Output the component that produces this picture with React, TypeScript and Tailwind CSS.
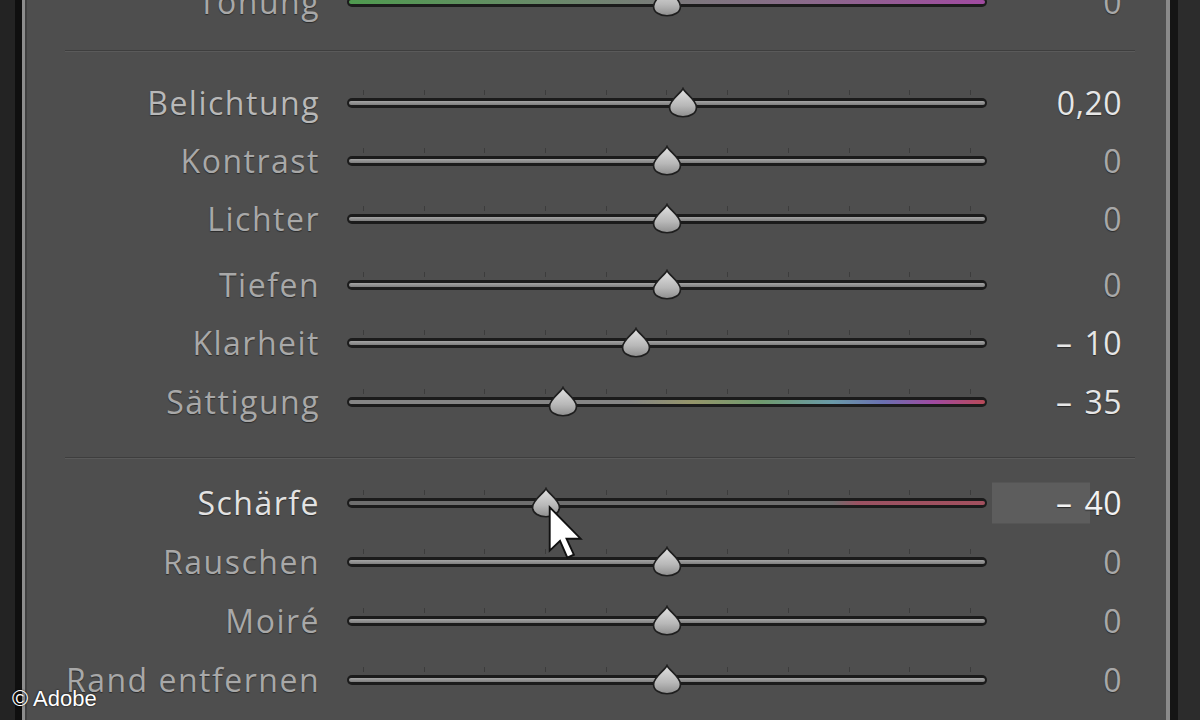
import React from "react";

type Row = {
  label: string;
  value: string;
  neg?: boolean;
  pos: number;
  h: string;
  fill: string;
  labelColor: string;
  valueColor: string;
  extra?: string;
  highlight?: boolean;
  cursor?: boolean;
};

const DEF = "bg-[linear-gradient(180deg,#a4a4a4,#7e7e7e)]";

const TICKS = Array.from({ length: 11 });

function Thumb({ pos }: { pos: number }) {
  return (
    <svg
      className="absolute top-[-11px] z-10"
      style={{ left: pos - 17 }}
      width="34"
      height="31"
      viewBox="0 0 32 30"
    >
      <defs>
        <linearGradient id="tg" x1="0" y1="0" x2="0" y2="1">
          <stop offset="0" stopColor="#e2e2e2" />
          <stop offset="0.6" stopColor="#b8b8b8" />
          <stop offset="1" stopColor="#8e8e8e" />
        </linearGradient>
      </defs>
      <path
        d="M16 1.5 C18 6 29 12.5 29 19.5 C29 25.5 23 28.8 16 28.8 C9 28.8 3 25.5 3 19.5 C3 12.5 14 6 16 1.5 Z"
        fill="url(#tg)"
        stroke="#1e1e1e"
        strokeWidth="1.6"
      />
    </svg>
  );
}

function Cursor() {
  return (
    <svg
      className="absolute left-[200px] top-[6px] z-20"
      width="38"
      height="58"
      viewBox="0 0 14 21"
    >
      <path
        d="M1 1 L1 17 L4.8 13.4 L7.5 19.6 L9.9 18.5 L7.2 12.6 L12.4 12.6 Z"
        fill="#ffffff"
        stroke="#111111"
        strokeWidth="0.7"
        strokeLinejoin="miter"
      />
    </svg>
  );
}

function Slider({ row }: { row: Row }) {
  return (
    <div className="ml-[27px] flex w-[640px] flex-col">
      <div className="mb-[3px] flex h-[5px] justify-between px-[16px]">
        {TICKS.map((_, i) => (
          <div key={i} className="h-full w-px bg-[#3c3c3c]" />
        ))}
      </div>
      <div className="relative h-[10px] w-full rounded-full bg-[#1b1b1b] px-[2px] py-[3px]">
        <div className={`h-full w-full rounded-full ${row.fill}`} />
        <Thumb pos={row.pos} />
        {row.cursor && <Cursor />}
      </div>
      <div className="h-[8px]" />
    </div>
  );
}

function SliderRow({ row }: { row: Row }) {
  return (
    <div className={`flex shrink-0 items-center ${row.h} ${row.extra ?? ""}`}>
      <div
        className={`w-[293px] text-right text-[32px] leading-none tracking-[1.5px] [text-shadow:0_1px_1px_#2b2b2b] ${row.labelColor}`}
      >
        {row.label}
      </div>
      <Slider row={row} />
      <div className="relative flex w-[135px] items-center justify-end">
        {row.highlight && (
          <div className="absolute left-[5px] top-1/2 h-[41px] w-[98px] -translate-y-1/2 bg-[#5d5d5d]" />
        )}
        <span
          className={`relative flex items-center text-[32px] leading-none tracking-[0.5px] [text-shadow:0_1px_1px_#2b2b2b] ${row.valueColor}`}
        >
          {row.neg && <span className="mr-[12px]">–</span>}
          <span>{row.value}</span>
        </span>
      </div>
    </div>
  );
}

function Separator({ pt, h }: { pt: string; h: string }) {
  return (
    <div className={`flex shrink-0 flex-col ${h} ${pt}`}>
      <div className="ml-[38px] mr-[31px] h-[2px] border-b border-t border-b-[#5a5a5a] border-t-[#3e3e3e]" />
    </div>
  );
}

const dim = "text-[#a8a8a8]";
const bright = "text-[#e6e6e6]";

const toning: Row = {
  label: "Tönung",
  value: "0",
  pos: 320,
  h: "h-[58px]",
  extra: "-mt-[27px]",
  fill: "bg-[linear-gradient(90deg,#4f9a4f,#688a68_30%,#7a7a7a_50%,#8a6a8a_72%,#a04aa0)]",
  labelColor: dim,
  valueColor: dim,
};

const group1: Row[] = [
  { label: "Belichtung", value: "0,20", pos: 336, h: "h-[59px]", fill: DEF, labelColor: "text-[#b8b8b8]", valueColor: bright },
  { label: "Kontrast", value: "0", pos: 320, h: "h-[58px]", fill: DEF, labelColor: dim, valueColor: dim },
  { label: "Lichter", value: "0", pos: 320, h: "h-[58px]", fill: DEF, labelColor: dim, valueColor: dim },
];

const group2: Row[] = [
  { label: "Tiefen", value: "0", pos: 320, h: "h-[58px]", extra: "mt-[8px]", fill: DEF, labelColor: dim, valueColor: dim },
  { label: "Klarheit", value: "10", neg: true, pos: 289, h: "h-[58px]", fill: DEF, labelColor: dim, valueColor: bright },
  {
    label: "Sättigung",
    value: "35",
    neg: true,
    pos: 216,
    h: "h-[59px]",
    fill: "bg-[linear-gradient(90deg,#858585_0%,#858585_44%,#95956a_54%,#6f9a6f_65%,#6a9aa8_76%,#6a70b0_84%,#a04aa0_92%,#b84a58_100%)]",
    labelColor: dim,
    valueColor: bright,
  },
];

const group3: Row[] = [
  {
    label: "Schärfe",
    value: "40",
    neg: true,
    pos: 199,
    h: "h-[58px]",
    fill: "bg-[linear-gradient(90deg,#6e6e6e_0%,#6e6e6e_76%,#9a5262_80%,#a2505e_100%)]",
    labelColor: "text-[#e2e2e2]",
    valueColor: "text-[#f2f2f2]",
    highlight: true,
    cursor: true,
  },
  { label: "Rauschen", value: "0", pos: 320, h: "h-[59px]", fill: DEF, labelColor: dim, valueColor: dim },
  { label: "Moiré", value: "0", pos: 320, h: "h-[59px]", fill: DEF, labelColor: dim, valueColor: dim },
  { label: "Rand entfernen", value: "0", pos: 320, h: "h-[59px]", fill: DEF, labelColor: dim, valueColor: dim },
];

export default function App() {
  return (
    <div className="relative flex h-[720px] w-[1200px] overflow-hidden bg-[#232323] font-['Open_Sans',sans-serif]">
      <div className="w-[15px] shrink-0 bg-[#232323]" />
      <div className="w-[7px] shrink-0 bg-[#0f0f0f]" />
      <div className="w-[3px] shrink-0 bg-[#8c8c8c]" />
      <div className="w-[2px] shrink-0 bg-[#3f3f3f]" />
      <div className="flex flex-1 flex-col overflow-hidden bg-[#4e4e4e]">
        <SliderRow row={toning} />
        <Separator h="h-[42px]" pt="pt-[19px]" />
        {group1.map((r) => (
          <SliderRow key={r.label} row={r} />
        ))}
        {group2.map((r) => (
          <SliderRow key={r.label} row={r} />
        ))}
        <Separator h="h-[43px]" pt="pt-[26px]" />
        {group3.map((r) => (
          <SliderRow key={r.label} row={r} />
        ))}
      </div>
      <div className="w-[4px] shrink-0 bg-[#8a8a8a]" />
      <div className="w-[8px] shrink-0 bg-[#151515]" />
      <div className="w-[22px] shrink-0 bg-[#2c2c2c]" />
      <div className="absolute left-[12px] top-[688px] font-['Liberation_Sans',Arial,sans-serif] text-[22px] leading-none text-white [text-shadow:0_0_2px_#000]">
        © Adobe
      </div>
    </div>
  );
}
